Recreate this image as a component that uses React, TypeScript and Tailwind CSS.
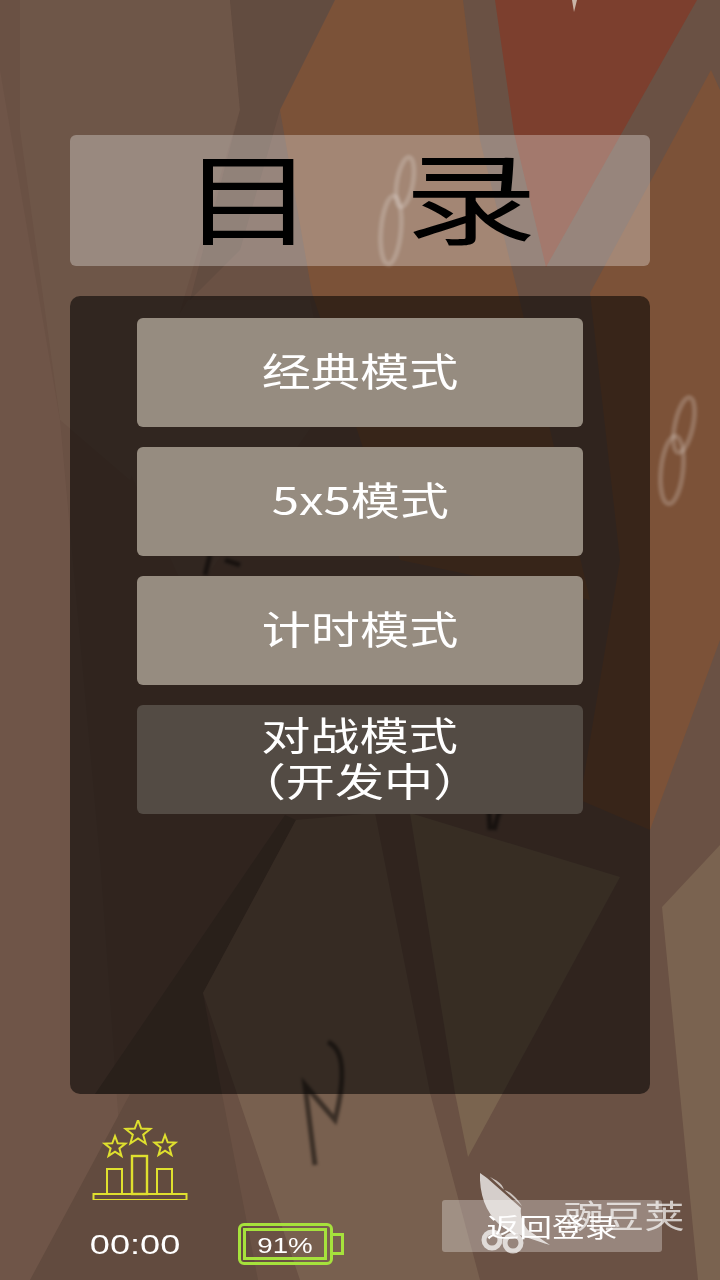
const cjk = { fontFamily: '"Noto Sans CJK SC", "Noto Sans", sans-serif' };
const latin = { fontFamily: '"Liberation Sans", sans-serif' };

function Backdrop() {
  return (
    <svg className="absolute inset-0 w-[720px] h-[1280px]" viewBox="0 0 720 1280">
      <rect width="720" height="1280" fill="#6a5144" />
      <polygon points="20,0 230,0 240,110 130,480 60,420 20,130" fill="#6e5648" />
      <polygon points="0,70 60,420 100,860 130,1280 0,1280" fill="#6f5548" />
      <polygon points="230,0 335,0 280,110 240,250 190,300 240,110" fill="#624c40" />
      <polygon points="335,0 463,0 480,140 518,293 590,600 400,560 312,293 280,110" fill="#7b5238" />
      <polygon points="495,0 697,0 546,267 514,133" fill="#7c3f2e" />
      <polygon points="711,70 720,90 720,640 650,830 580,800 620,560 590,293" fill="#7c5238" />
      <polygon points="188,300 310,300 330,400 190,600 110,430" fill="#6e5548" />
      <polygon points="130,1094 222,1094 258,1280 30,1280" fill="#624b3f" />
      <polygon points="95,1094 285,815 296,820 203,993 222,1094" fill="#5c473b" />
      <polygon points="296,820 375,813 430,1093 480,1280 300,1280 203,993" fill="#78604f" />
      <polygon points="410,813 620,877 468,1157 455,1093" fill="#7a644f" />
      <polygon points="720,845 662,907 698,1280 720,1280" fill="#7a6350" />
      <g className="blur-[1.5px]" fill="none" stroke="#ffffff" strokeOpacity="0.2" strokeWidth="5">
        <ellipse cx="405" cy="182" rx="8" ry="25" transform="rotate(10 405 182)" />
        <ellipse cx="391" cy="230" rx="10" ry="34" transform="rotate(5 391 230)" />
        <ellipse cx="684" cy="425" rx="9" ry="28" transform="rotate(12 684 425)" />
        <ellipse cx="672" cy="470" rx="11" ry="34" transform="rotate(6 672 470)" />
      </g>
      <polygon points="572,0 577,0 574,12" fill="#c9b5a8" />
      <g className="blur-[1.5px]" fill="none" stroke="#000000" strokeOpacity="0.5" strokeWidth="5">
        <path d="M328 1042 C345 1050 345 1080 335 1120 L305 1085 L315 1165" />
        <path d="M490 830 L486 750 L505 748 L522 770 L498 815 L494 830" />
        <path d="M205 575 L210 555 M225 560 L240 565" />
      </g>
    </svg>
  );
}

function Wide({ children, className }: { children: React.ReactNode; className?: string }) {
  return <span className={"inline-block scale-x-[1.26] " + (className ?? "")}>{children}</span>;
}

function MenuButton({ children, dim }: { children: React.ReactNode; dim?: boolean }) {
  return (
    <div
      className={
        "h-[109px] rounded-[6px] flex items-center justify-center text-center text-[39px] leading-[46px] text-white pb-[7px] " +
        (dim ? "bg-[#534b44]" : "bg-[#968c80]")
      }
    >
      <Wide>{children}</Wide>
    </div>
  );
}

function PodiumIcon() {
  const star = (cx: number, cy: number, r: number) => {
    const pts: string[] = [];
    for (let i = 0; i < 10; i++) {
      const rad = i % 2 === 0 ? r : r * 0.42;
      const a = -Math.PI / 2 + (i * Math.PI) / 5;
      pts.push(`${cx + rad * Math.cos(a)},${cy + rad * Math.sin(a)}`);
    }
    return pts.join(" ");
  };
  return (
    <svg width="96" height="80" viewBox="0 0 96 80" fill="none" stroke="#dfe02e" strokeWidth="2">
      <polygon points={star(46, 13, 13)} />
      <polygon points={star(23, 27, 11)} />
      <polygon points={star(73, 26, 11)} />
      <rect x="15" y="49" width="15" height="25" />
      <rect x="40" y="36" width="15" height="38" strokeWidth="2.4" />
      <rect x="65" y="49" width="15" height="25" />
      <rect x="1.5" y="74" width="93" height="6" />
    </svg>
  );
}

function Battery() {
  return (
    <div className="flex items-center shrink-0">
      <div className="w-[95px] h-[42px] rounded-[6px] border-[3px] border-[#a6e23c] p-[2px]">
        <div className="w-[84px] h-[32px] border-[3px] border-[#a6e23c] flex items-center justify-center">
          <Wide className="text-white text-[22px] leading-none">
            <span style={latin}>91%</span>
          </Wide>
        </div>
      </div>
      <div className="w-[11px] h-[22px] border-[3px] border-l-0 border-[#a6e23c]" />
    </div>
  );
}

function Watermark() {
  return (
    <div className="absolute left-[480px] top-[1172px] w-[210px] h-[85px]">
      <svg className="absolute left-0 top-0" width="80" height="85" viewBox="0 0 80 85">
        <path d="M0 1 C-1 25 8 45 24 56 C40 64 55 68 70 73 L48 58 C42 50 40 42 41 36 L7 6 Z" fill="#ffffff" fillOpacity="0.72" />
        <path d="M10 5 C15 8 22 10 24 18 C32 20 38 28 42 34 Z" fill="#ffffff" fillOpacity="0.65" />
        <g fill="none" stroke="#ffffff" strokeOpacity="0.7" strokeWidth="5">
          <circle cx="12" cy="68" r="8" />
          <circle cx="33" cy="71" r="8" />
        </g>
      </svg>
      <span className="absolute left-[82px] top-[22px] w-[124px] text-center text-[32px] leading-[40px] whitespace-nowrap text-white/70">
        <Wide>豌豆荚</Wide>
      </span>
    </div>
  );
}

export default function App() {
  return (
    <div className="relative w-[720px] h-[1280px] overflow-hidden" style={cjk}>
      <Backdrop />
      <div className="relative flex flex-col h-full px-[70px] pt-[135px]">
        <div className="h-[131px] rounded-[6px] bg-white/30 flex items-center justify-center pb-[14px]">
          <span className="inline-block scale-x-[1.33] text-[100px] leading-none text-black whitespace-pre">目   录</span>
        </div>
        <div className="mt-[30px] h-[798px] rounded-[10px] bg-black/55 px-[67px] pt-[22px] flex flex-col gap-[20px]">
          <MenuButton>经典模式</MenuButton>
          <MenuButton>5x5模式</MenuButton>
          <MenuButton>计时模式</MenuButton>
          <MenuButton dim>
            对战模式
            <br />
            （开发中）
          </MenuButton>
        </div>
        <div className="mt-[26px] flex items-start">
          <div className="w-[112px] ml-[20px] flex flex-col items-start shrink-0">
            <div className="ml-[2px]">
              <PodiumIcon />
            </div>
            <span
              className="inline-block scale-x-[1.29] ml-[10px] mt-[29px] text-white text-[28px] leading-[32px]"
              style={latin}
            >
              00:00
            </span>
          </div>
          <div className="ml-[36px] mt-[103px]">
            <Battery />
          </div>
          <div className="ml-[98px] mt-[80px] w-[220px] h-[52px] shrink-0 rounded-[3px] bg-white/30 flex items-center justify-center text-white text-[26px] leading-none">
            <Wide>返回登录</Wide>
          </div>
        </div>
      </div>
      <Watermark />
    </div>
  );
}
